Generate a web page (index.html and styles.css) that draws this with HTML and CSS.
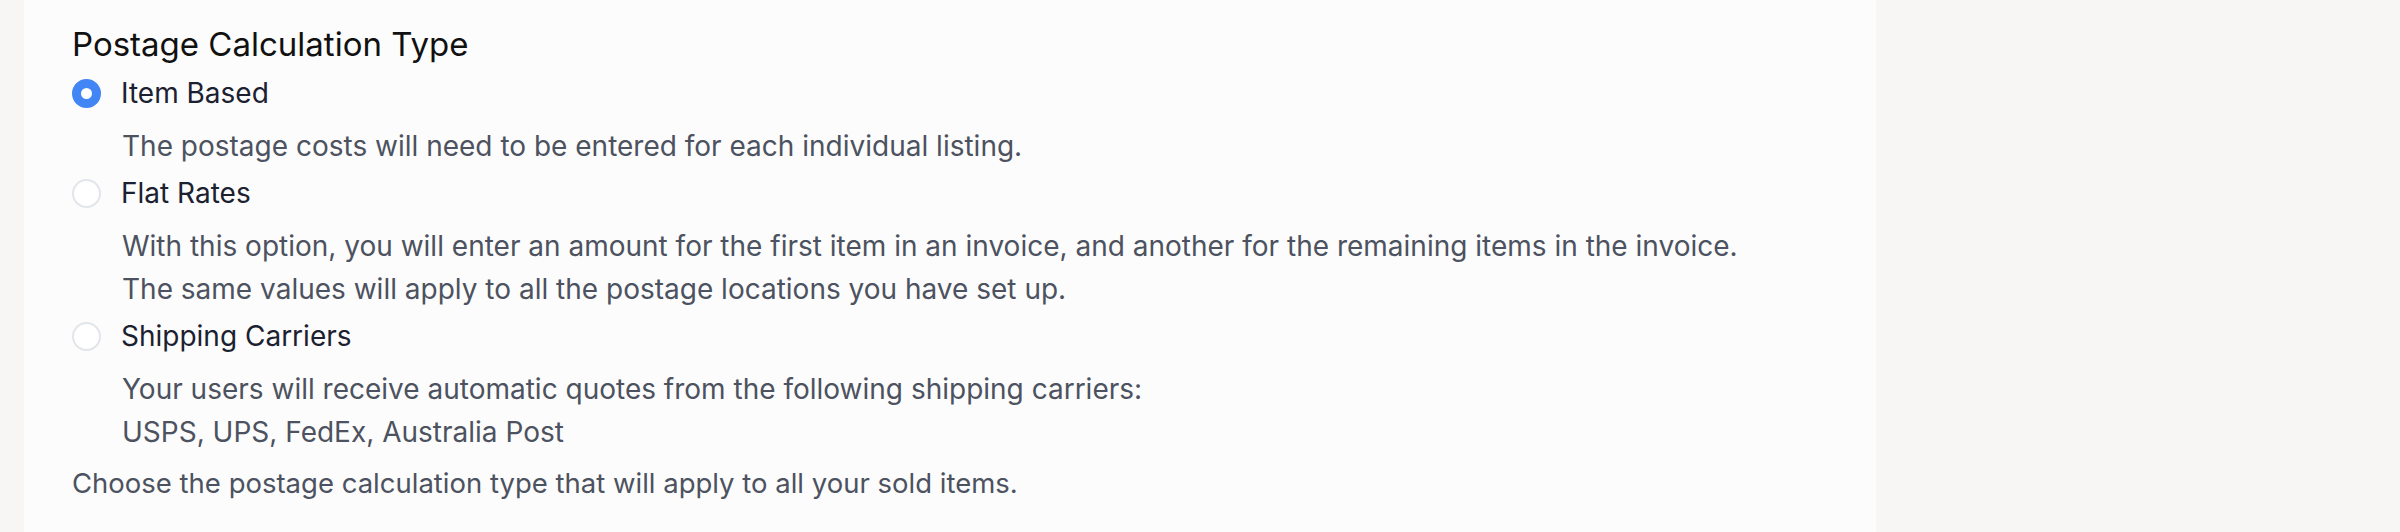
FILE: index.html
```html
<!DOCTYPE html>
<html lang="en">
<head>
    <meta charset="UTF-8">
    <title>Postage Calculation Type</title>
    <link rel="stylesheet" href="styles.css">
</head>
<body>
    <div class="panel">
        <h2 class="title">Postage Calculation Type</h2>
        <div class="option">
            <span class="radio checked"></span>
            <span class="option-label">Item Based</span>
        </div>
        <p class="option-desc">The postage costs will need to be entered for each individual listing.</p>
        <div class="option">
            <span class="radio"></span>
            <span class="option-label">Flat Rates</span>
        </div>
        <p class="option-desc">With this option, you will enter an amount for the first item in an invoice, and another for the remaining items in the invoice.<br>The same values will apply to all the postage locations you have set up.</p>
        <div class="option">
            <span class="radio"></span>
            <span class="option-label">Shipping Carriers</span>
        </div>
        <p class="option-desc">Your users will receive automatic quotes from the following shipping carriers:<br>USPS, UPS, FedEx, Australia Post</p>
        <p class="hint">Choose the postage calculation type that will apply to all your sold items.</p>
    </div>
</body>
</html>
```

FILE: styles.css
```css
body {
    font-family: Inter, "Noto Sans", sans-serif;
    margin: 0;
    background-color: #f7f6f5;
}
.panel {
    width: 1852px;
    margin-left: 24px;
    min-height: 532px;
    box-sizing: border-box;
    background: #fcfcfc;
    padding: 22px 48px 0;
}
.title {
    margin: 0 0 5px;
    font-size: 33px;
    font-weight: 400;
    line-height: 44px;
    color: #111;
}
.option {
    display: flex;
    align-items: center;
    height: 44px;
}
.radio {
    width: 29px;
    height: 29px;
    border-radius: 50%;
    border: 2px solid #e2e5ea;
    background: #fff;
    box-sizing: border-box;
    margin-right: 20px;
}
.radio.checked {
    border: 9px solid #4285f4;
}
.option-label {
    font-size: 28px;
    color: #1b2130;
}
.option-desc {
    margin: 10px 0 3px 50px;
    font-size: 28px;
    line-height: 43px;
    color: #4c5260;
}
.hint {
    margin: 8px 0 0;
    font-size: 27.5px;
    line-height: 43px;
    color: #4c5260;
}
```
